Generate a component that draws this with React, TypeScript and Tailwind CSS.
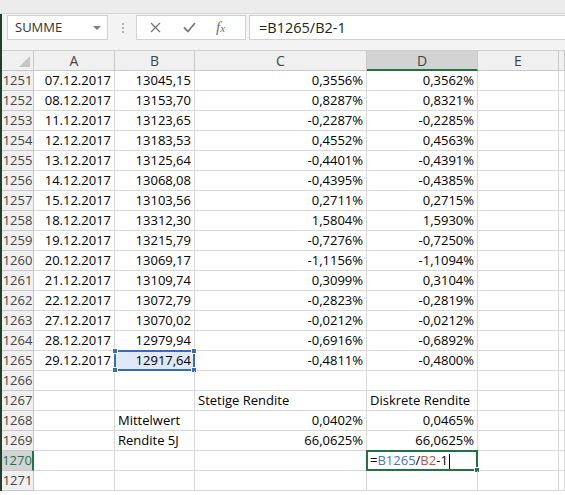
import React from "react";

const cols = ["A", "B", "C", "D", "E", ""];

type Row = { n: number; a?: string; b?: string; c?: string; d?: string; cLeft?: boolean; dLeft?: boolean; bLeft?: boolean };

const rows: Row[] = [
  { n: 1251, a: "07.12.2017", b: "13045,15", c: "0,3556%", d: "0,3562%" },
  { n: 1252, a: "08.12.2017", b: "13153,70", c: "0,8287%", d: "0,8321%" },
  { n: 1253, a: "11.12.2017", b: "13123,65", c: "-0,2287%", d: "-0,2285%" },
  { n: 1254, a: "12.12.2017", b: "13183,53", c: "0,4552%", d: "0,4563%" },
  { n: 1255, a: "13.12.2017", b: "13125,64", c: "-0,4401%", d: "-0,4391%" },
  { n: 1256, a: "14.12.2017", b: "13068,08", c: "-0,4395%", d: "-0,4385%" },
  { n: 1257, a: "15.12.2017", b: "13103,56", c: "0,2711%", d: "0,2715%" },
  { n: 1258, a: "18.12.2017", b: "13312,30", c: "1,5804%", d: "1,5930%" },
  { n: 1259, a: "19.12.2017", b: "13215,79", c: "-0,7276%", d: "-0,7250%" },
  { n: 1260, a: "20.12.2017", b: "13069,17", c: "-1,1156%", d: "-1,1094%" },
  { n: 1261, a: "21.12.2017", b: "13109,74", c: "0,3099%", d: "0,3104%" },
  { n: 1262, a: "22.12.2017", b: "13072,79", c: "-0,2823%", d: "-0,2819%" },
  { n: 1263, a: "27.12.2017", b: "13070,02", c: "-0,0212%", d: "-0,0212%" },
  { n: 1264, a: "28.12.2017", b: "12979,94", c: "-0,6916%", d: "-0,6892%" },
  { n: 1265, a: "29.12.2017", b: "12917,64", c: "-0,4811%", d: "-0,4800%" },
  { n: 1266 },
  { n: 1267, c: "Stetige Rendite", d: "Diskrete Rendite", cLeft: true, dLeft: true },
  { n: 1268, b: "Mittelwert", c: "0,0402%", d: "0,0465%", bLeft: true },
  { n: 1269, b: "Rendite 5J", c: "66,0625%", d: "66,0625%", bLeft: true },
  { n: 1270, dLeft: true },
  { n: 1271 },
];

const cell = "h-[20px] border-r border-b border-[#d9d9d9] flex items-center whitespace-nowrap pt-px";

function Handle({ pos }: { pos: string }) {
  return <div className={`absolute h-[6px] w-[6px] bg-[#3a6ab8] border border-white ${pos}`} />;
}

function Formula() {
  return (
    <span>
      =<span className="text-[#4a74c4]">B1265</span>/<span className="text-[#c0504d]">B2</span>-1
    </span>
  );
}

export default function App() {
  return (
    <div className="relative h-[495px] w-[565px] overflow-hidden bg-white text-[13px] text-black font-['Open_Sans',Arial,sans-serif]">
      {/* title remnant */}
      <div className="h-[14px] border-b border-[#d6d6d6] bg-[#ececec]" />

      <div className="border-l-2 border-[#1e3f2a]">
        {/* formula bar */}
        <div className="flex h-[36px] items-start bg-[#f3f3f3] pt-px">
          <div className="ml-[5px] flex h-[25px] w-[101px] items-center border border-[#d0d0d0] bg-white pl-[7px] text-[13px] text-[#333]">
            <span className="flex-1">SUMME</span>
            <span className="mr-[6px] h-0 w-0 border-x-[4px] border-t-[4px] border-x-transparent border-t-[#808080]" />
          </div>
          <div className="ml-[14px] mt-[8px] flex flex-col gap-[2px]">
            <span className="h-[2px] w-[2px] bg-[#b0b0b0]" />
            <span className="h-[2px] w-[2px] bg-[#b0b0b0]" />
            <span className="h-[2px] w-[2px] bg-[#b0b0b0]" />
          </div>
          <div className="ml-[12px] flex h-[25px] w-[110px] items-center border border-[#d0d0d0] bg-white">
            <svg className="ml-[13px]" width="11" height="11" viewBox="0 0 11 11">
              <path d="M1 1l9 9M10 1l-9 9" stroke="#7a7a7a" strokeWidth="1.4" />
            </svg>
            <svg className="ml-[22px]" width="13" height="11" viewBox="0 0 13 11">
              <path d="M1 5.5l4 4 7-8.5" stroke="#7a7a7a" strokeWidth="1.8" fill="none" />
            </svg>
            <span className="ml-[20px] font-['Liberation_Serif',serif] text-[15px] italic text-[#707070]">
              f<span className="text-[11px]">x</span>
            </span>
          </div>
          <div className="ml-[3px] flex h-[25px] flex-1 items-center border border-r-0 border-[#d0d0d0] bg-white pl-[9px] text-[14.5px] text-[#222]">
            =B1265/B2-1
          </div>
        </div>

        {/* sheet */}
        <div className="grid grid-cols-[32px_81px_80px_172px_111px_81px_1fr] border-t border-[#d0d0d0]">
          {/* header row */}
          <div className="relative h-[20px] border-r border-b border-[#c8c8c8] bg-[#f0f0f0]">
            <div className="absolute bottom-[3px] right-[3px] h-0 w-0 border-b-[11px] border-l-[11px] border-l-transparent border-b-[#c6c6c6]" />
          </div>
          {cols.map((c) => (
            <div
              key={c || "f"}
              className={`flex h-[20px] items-center justify-center border-r text-[14px] text-[#444] ${
                c === "D"
                  ? "border-b-2 border-b-[#217346] border-r-[#c8c8c8] bg-[#d3d3d3]"
                  : "border-b border-[#c8c8c8] bg-[#f0f0f0]"
              }`}
            >
              {c}
            </div>
          ))}

          {rows.map((r) => (
            <React.Fragment key={r.n}>
              <div
                className={`flex h-[20px] items-center justify-center border-b border-[#c8c8c8] pt-px ${
                  r.n === 1270
                    ? "border-r-2 border-r-[#217346] bg-[#d3d3d3] text-[#217346]"
                    : "border-r border-[#c8c8c8] bg-[#f0f0f0] text-[#444]"
                }`}
              >
                {r.n}
              </div>
              <div className={`${cell} justify-end pr-[3px]`}>{r.a}</div>
              <div
                className={`${cell} relative ${r.bLeft ? "justify-start pl-[3px]" : "justify-end pr-[3px]"} ${
                  r.n === 1265 ? "bg-[#dfe8f6]" : ""
                }`}
              >
                {r.b}
                {r.n === 1265 && (
                  <div className="absolute -left-px -top-px bottom-[-1px] right-[-1px] border-2 border-[#3a6ab8]">
                    <Handle pos="-left-[4px] -top-[4px]" />
                    <Handle pos="-right-[4px] -top-[4px]" />
                    <Handle pos="-left-[4px] -bottom-[4px]" />
                    <Handle pos="-right-[4px] -bottom-[4px]" />
                  </div>
                )}
              </div>
              <div className={`${cell} ${r.cLeft ? "justify-start pl-[3px]" : "justify-end pr-[3px]"}`}>{r.c}</div>
              <div className={`${cell} relative ${r.dLeft ? "justify-start pl-[3px]" : "justify-end pr-[3px]"}`}>
                {r.d}
                {r.n === 1270 && (
                  <>
                    <div className="absolute -left-px -top-px bottom-[-1px] right-[-1px] border-2 border-[#217346]">
                      <div className="absolute -bottom-[4px] -right-[4px] h-[6px] w-[6px] border border-white bg-[#217346]" />
                    </div>
                    <span className="flex items-center">
                      <Formula />
                      <span className="ml-px h-[15px] w-px bg-black" />
                    </span>
                  </>
                )}
              </div>
              <div className={cell} />
              <div className={cell} />
            </React.Fragment>
          ))}
        </div>
      </div>
    </div>
  );
}
